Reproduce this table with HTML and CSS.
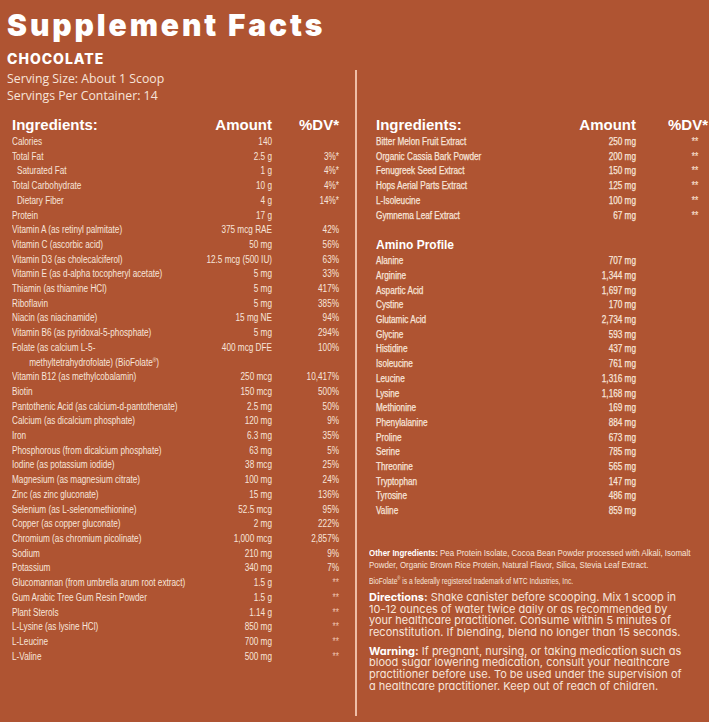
FILE: index.html
```html
<!DOCTYPE html>
<html lang="en">
<head>
<meta charset="utf-8">
<title>Supplement Facts</title>
<link rel="stylesheet" href="styles.css">
</head>
<body>
<main class="label">
  <header class="label-head">
    <h1 class="title">Supplement Facts</h1>
    <p class="flavor">CHOCOLATE</p>
  </header>
  <div class="panels">
    <section class="panel panel-left">
      <div class="serving">
        <p>Serving Size: About 1 Scoop</p>
        <p>Servings Per Container: 14</p>
      </div>
      <div class="thead">
        <span>Ingredients:</span><span class="num">Amount</span><span class="num">%DV*</span>
      </div>
      <div class="rows">
        <div class="row"><span class="name">Calories</span><span class="num">140</span><span class="num"></span></div>
        <div class="row"><span class="name">Total Fat</span><span class="num">2.5 g</span><span class="num">3%*</span></div>
        <div class="row"><span class="name sub">Saturated Fat</span><span class="num">1 g</span><span class="num">4%*</span></div>
        <div class="row"><span class="name">Total Carbohydrate</span><span class="num">10 g</span><span class="num">4%*</span></div>
        <div class="row"><span class="name sub">Dietary Fiber</span><span class="num">4 g</span><span class="num">14%*</span></div>
        <div class="row"><span class="name">Protein</span><span class="num">17 g</span><span class="num"></span></div>
        <div class="row"><span class="name">Vitamin A (as retinyl palmitate)</span><span class="num">375 mcg RAE</span><span class="num">42%</span></div>
        <div class="row"><span class="name">Vitamin C (ascorbic acid)</span><span class="num">50 mg</span><span class="num">56%</span></div>
        <div class="row"><span class="name">Vitamin D3 (as cholecalciferol)</span><span class="num">12.5 mcg (500 IU)</span><span class="num">63%</span></div>
        <div class="row"><span class="name">Vitamin E (as d-alpha tocopheryl acetate)</span><span class="num">5 mg</span><span class="num">33%</span></div>
        <div class="row"><span class="name">Thiamin (as thiamine HCl)</span><span class="num">5 mg</span><span class="num">417%</span></div>
        <div class="row"><span class="name">Riboflavin</span><span class="num">5 mg</span><span class="num">385%</span></div>
        <div class="row"><span class="name">Niacin (as niacinamide)</span><span class="num">15 mg NE</span><span class="num">94%</span></div>
        <div class="row"><span class="name">Vitamin B6 (as pyridoxal-5-phosphate)</span><span class="num">5 mg</span><span class="num">294%</span></div>
        <div class="row"><span class="name">Folate (as calcium L-5-<span class="cont">methyltetrahydrofolate) (BioFolate<sup>®</sup>)</span></span><span class="num">400 mcg DFE</span><span class="num">100%</span></div>
        <div class="row"><span class="name">Vitamin B12 (as methylcobalamin)</span><span class="num">250 mcg</span><span class="num">10,417%</span></div>
        <div class="row"><span class="name">Biotin</span><span class="num">150 mcg</span><span class="num">500%</span></div>
        <div class="row"><span class="name">Pantothenic Acid (as calcium-d-pantothenate)</span><span class="num">2.5 mg</span><span class="num">50%</span></div>
        <div class="row"><span class="name">Calcium (as dicalcium phosphate)</span><span class="num">120 mg</span><span class="num">9%</span></div>
        <div class="row"><span class="name">Iron</span><span class="num">6.3 mg</span><span class="num">35%</span></div>
        <div class="row"><span class="name">Phosphorous (from dicalcium phosphate)</span><span class="num">63 mg</span><span class="num">5%</span></div>
        <div class="row"><span class="name">Iodine (as potassium iodide)</span><span class="num">38 mcg</span><span class="num">25%</span></div>
        <div class="row"><span class="name">Magnesium (as magnesium citrate)</span><span class="num">100 mg</span><span class="num">24%</span></div>
        <div class="row"><span class="name">Zinc (as zinc gluconate)</span><span class="num">15 mg</span><span class="num">136%</span></div>
        <div class="row"><span class="name">Selenium (as L-selenomethionine)</span><span class="num">52.5 mcg</span><span class="num">95%</span></div>
        <div class="row"><span class="name">Copper (as copper gluconate)</span><span class="num">2 mg</span><span class="num">222%</span></div>
        <div class="row"><span class="name">Chromium (as chromium picolinate)</span><span class="num">1,000 mcg</span><span class="num">2,857%</span></div>
        <div class="row"><span class="name">Sodium</span><span class="num">210 mg</span><span class="num">9%</span></div>
        <div class="row"><span class="name">Potassium</span><span class="num">340 mg</span><span class="num">7%</span></div>
        <div class="row"><span class="name">Glucomannan (from umbrella arum root extract)</span><span class="num">1.5 g</span><span class="num ns">**</span></div>
        <div class="row"><span class="name">Gum Arabic Tree Gum Resin Powder</span><span class="num">1.5 g</span><span class="num ns">**</span></div>
        <div class="row"><span class="name">Plant Sterols</span><span class="num">1.14 g</span><span class="num ns">**</span></div>
        <div class="row"><span class="name">L-Lysine (as lysine HCl)</span><span class="num">850 mg</span><span class="num ns">**</span></div>
        <div class="row"><span class="name">L-Leucine</span><span class="num">700 mg</span><span class="num ns">**</span></div>
        <div class="row"><span class="name">L-Valine</span><span class="num">500 mg</span><span class="num ns">**</span></div>
      </div>
    </section>
    <div class="divider"></div>
    <section class="panel panel-right">
      <div class="thead">
        <span>Ingredients:</span><span class="num">Amount</span><span class="num">%DV*</span>
      </div>
      <div class="rows">
        <div class="row"><span class="name">Bitter Melon Fruit Extract</span><span class="num">250 mg</span><span class="num ns">**</span></div>
        <div class="row"><span class="name">Organic Cassia Bark Powder</span><span class="num">200 mg</span><span class="num ns">**</span></div>
        <div class="row"><span class="name">Fenugreek Seed Extract</span><span class="num">150 mg</span><span class="num ns">**</span></div>
        <div class="row"><span class="name">Hops Aerial Parts Extract</span><span class="num">125 mg</span><span class="num ns">**</span></div>
        <div class="row"><span class="name">L-Isoleucine</span><span class="num">100 mg</span><span class="num ns">**</span></div>
        <div class="row"><span class="name">Gymnema Leaf Extract</span><span class="num">67 mg</span><span class="num ns">**</span></div>
      </div>
      <h2 class="amino-title">Amino Profile</h2>
      <div class="rows">
        <div class="row"><span class="name">Alanine</span><span class="num">707 mg</span><span class="num"></span></div>
        <div class="row"><span class="name">Arginine</span><span class="num">1,344 mg</span><span class="num"></span></div>
        <div class="row"><span class="name">Aspartic Acid</span><span class="num">1,697 mg</span><span class="num"></span></div>
        <div class="row"><span class="name">Cystine</span><span class="num">170 mg</span><span class="num"></span></div>
        <div class="row"><span class="name">Glutamic Acid</span><span class="num">2,734 mg</span><span class="num"></span></div>
        <div class="row"><span class="name">Glycine</span><span class="num">593 mg</span><span class="num"></span></div>
        <div class="row"><span class="name">Histidine</span><span class="num">437 mg</span><span class="num"></span></div>
        <div class="row"><span class="name">Isoleucine</span><span class="num">761 mg</span><span class="num"></span></div>
        <div class="row"><span class="name">Leucine</span><span class="num">1,316 mg</span><span class="num"></span></div>
        <div class="row"><span class="name">Lysine</span><span class="num">1,168 mg</span><span class="num"></span></div>
        <div class="row"><span class="name">Methionine</span><span class="num">169 mg</span><span class="num"></span></div>
        <div class="row"><span class="name">Phenylalanine</span><span class="num">884 mg</span><span class="num"></span></div>
        <div class="row"><span class="name">Proline</span><span class="num">673 mg</span><span class="num"></span></div>
        <div class="row"><span class="name">Serine</span><span class="num">785 mg</span><span class="num"></span></div>
        <div class="row"><span class="name">Threonine</span><span class="num">565 mg</span><span class="num"></span></div>
        <div class="row"><span class="name">Tryptophan</span><span class="num">147 mg</span><span class="num"></span></div>
        <div class="row"><span class="name">Tyrosine</span><span class="num">486 mg</span><span class="num"></span></div>
        <div class="row"><span class="name">Valine</span><span class="num">859 mg</span><span class="num"></span></div>
      </div>
      <div class="notes">
        <p class="other"><b>Other Ingredients:</b> Pea Protein Isolate, Cocoa Bean Powder processed with Alkali, Isomalt<br>Powder, Organic Brown Rice Protein, Natural Flavor, Silica, Stevia Leaf Extract.</p>
        <p class="trademark">BioFolate<sup>®</sup> is a federally registered trademark of MTC Industries, Inc.</p>
        <p class="copy"><b>Directions:</b> Shake canister before scooping. Mix 1 scoop in<br>10-12 ounces of water twice daily or as recommended by<br>your healthcare practitioner. Consume within 5 minutes of<br>reconstitution. If blending, blend no longer than 15 seconds.</p>
        <p class="copy warning"><b>Warning:</b> If pregnant, nursing, or taking medication such as<br>blood sugar lowering medication, consult your healthcare<br>practitioner before use. To be used under the supervision of<br>a healthcare practitioner. Keep out of reach of children.</p>
      </div>
    </section>
  </div>
</main>
</body>
</html>
```

FILE: styles.css
```css
* { box-sizing: border-box; margin: 0; padding: 0; }

html, body {
  background: #af5432;
}

body {
  width: 709px;
  height: 722px;
  overflow: hidden;
  color: #f7e4da;
  font-family: "Liberation Sans", Arial, sans-serif;
}

.label-head {
  padding: 10px 0 0 7px;
}

.title {
  font-family: Inter, "Liberation Sans", sans-serif;
  font-weight: 900;
  font-size: 30px;
  line-height: 30px;
  letter-spacing: 2.9px;
  color: #ffffff;
}

.flavor {
  margin-top: 12px;
  font-family: Inter, "Liberation Sans", sans-serif;
  font-weight: 800;
  font-size: 14px;
  line-height: 14px;
  letter-spacing: 1px;
  color: #ffffff;
}

.panels {
  display: flex;
  height: 646px;
  margin-top: 4px;
}

.panel {
  min-width: 0;
}

.panel-left {
  flex: 0 0 355px;
  padding: 0 16px 0 12px;
}

.divider {
  flex: 0 0 2px;
  background: #efbea7;
}

.panel-right {
  flex: 1 1 0;
  padding: 46px 1px 0 19px;
}

.serving {
  margin-left: -5px;
  font-family: "Open Sans", sans-serif;
  font-size: 12.3px;
  line-height: 17px;
  color: #f7e4da;
}

.thead {
  display: grid;
  grid-template-columns: minmax(0, 1fr) 80px 67px;
  font-family: "Liberation Sans", Arial, sans-serif;
  font-weight: 700;
  font-size: 15px;
  line-height: 17px;
  color: #ffffff;
}

.panel-left .thead {
  margin-top: 12px;
}

.panel-right .thead {
  grid-template-columns: minmax(0, 1fr) 80px 72px;
}

.num {
  text-align: right;
  white-space: nowrap;
}

.rows {
  margin-top: 2px;
}

.row {
  display: grid;
  grid-template-columns: minmax(0, 1fr) 80px 67px;
  font-family: "Liberation Sans", Arial, sans-serif;
  font-size: 10px;
  line-height: 14.7px;
  color: #f7e4da;
}

/* the label face is a condensed sans: narrow the regular face */
.row > .name {
  white-space: nowrap;
  transform: scaleX(0.82);
  transform-origin: left center;
}

.row > .num {
  transform: scaleX(0.82);
  transform-origin: right center;
}

.panel-right .row {
  grid-template-columns: minmax(0, 1fr) 80px 72px;
  -webkit-text-stroke: 0.25px #f7e4da;
}

.panel-right .row > .ns {
  padding-right: 12px;
}

.name.sub {
  padding-left: 6px;
}

.name .cont {
  display: block;
  padding-left: 21px;
}

.name sup {
  font-size: 6px;
  line-height: 0;
}

.ns {
  color: #eec3b1;
}

.amino-title {
  margin-top: 15px;
  margin-bottom: 1px;
  font-family: "Liberation Sans", Arial, sans-serif;
  font-weight: 700;
  font-size: 12px;
  line-height: 14px;
  color: #ffffff;
}

.notes {
  margin: 28px 0 0 -7px;
}

.other {
  font-family: "Liberation Sans", Arial, sans-serif;
  font-size: 9.7px;
  line-height: 12px;
  white-space: nowrap;
  transform: scaleX(0.82);
  transform-origin: left top;
}

.other b {
  color: #ffffff;
}

.trademark {
  margin-top: 6px;
  font-family: "Liberation Sans", Arial, sans-serif;
  font-size: 8.2px;
  line-height: 10px;
  white-space: nowrap;
  transform: scaleX(0.82);
  transform-origin: left top;
}

.trademark sup {
  font-size: 5px;
  line-height: 0;
}

.copy {
  margin-top: 5px;
  font-family: Inter, "Liberation Sans", sans-serif;
  font-feature-settings: "cv11" 1;
  font-size: 11px;
  line-height: 11.7px;
  white-space: nowrap;
}

.copy b {
  font-weight: 700;
  color: #ffffff;
}

.warning {
  margin-top: 7px;
}
```
